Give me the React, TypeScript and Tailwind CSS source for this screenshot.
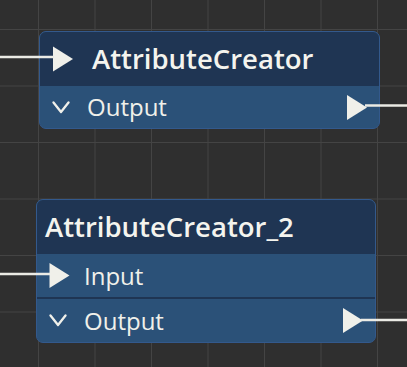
import React from 'react';

const font = { fontFamily: '"Open Sans", "Noto Sans", sans-serif' };

const Play = ({ className }: { className?: string }) => (
    <svg viewBox="0 0 20 25" className={className}>
        <path d="M0 0 L20 12.5 L0 25 Z" fill="#f0f0ea" />
    </svg>
);

const Chevron = () => (
    <svg viewBox="0 0 18 13" className="w-[18px] h-[13px]">
        <path d="M1.5 1.5 L9 11 L16.5 1.5" fill="none" stroke="#f0f0ea" strokeWidth="2.3" strokeLinecap="round" strokeLinejoin="round" />
    </svg>
);

const App: React.FC = () => {
    return (
        <div
            className="relative w-[407px] h-[367px] overflow-hidden bg-[#2f2f2f] bg-[linear-gradient(to_right,#444444_1px,transparent_1px),linear-gradient(to_bottom,#444444_1px,transparent_1px)] bg-[size:56.5px_56.5px] bg-[position:38px_29px]"
            style={font}
        >
            {/* node 1 */}
            <div className="absolute left-[39px] top-[31px] w-[341px] rounded-[7px] border border-[#33598c] bg-[#2b5178] overflow-hidden">
                <div className="h-[54px] flex items-center pl-[13px] bg-[#1f3553]">
                    <Play className="w-[20px] h-[26px]" />
                    <span className="ml-[19px] text-[27.5px] font-semibold text-[#f4f4ee] leading-none">AttributeCreator</span>
                </div>
                <div className="h-[42px] flex items-center pl-[12px] pr-[12px]">
                    <Chevron />
                    <span className="ml-[17px] text-[24px] text-[#f0f0ea] leading-none">Output</span>
                    <Play className="ml-auto w-[20px] h-[25px]" />
                </div>
            </div>

            {/* node 2 */}
            <div className="absolute left-[36px] top-[199px] w-[340px] rounded-[7px] border border-[#33598c] bg-[#2b5178] overflow-hidden">
                <div className="h-[54px] flex items-center pl-[8px] bg-[#1f3553]">
                    <span className="text-[27.5px] font-semibold text-[#f4f4ee] leading-none">AttributeCreator_2</span>
                </div>
                <div className="h-[45px] flex items-center pl-[12px] border-b-2 border-[#1f3553]">
                    <Play className="w-[21px] h-[25px]" />
                    <span className="ml-[14px] text-[24px] text-[#f0f0ea] leading-none">Input</span>
                </div>
                <div className="h-[43px] flex items-center pl-[12px] pr-[12px]">
                    <Chevron />
                    <span className="ml-[17px] text-[24px] text-[#f0f0ea] leading-none">Output</span>
                    <Play className="ml-auto w-[20px] h-[25px]" />
                </div>
            </div>

            {/* connections */}
            <svg className="absolute inset-0 pointer-events-none" width="407" height="367">
                <g stroke="#ebebe5" strokeWidth="2.6" fill="none">
                    <path d="M0 57 H54" />
                    <path d="M365 105.5 H407" />
                    <path d="M0 274 H50" />
                    <path d="M361 320 H407" />
                </g>
            </svg>
        </div>
    );
};

export default App;
